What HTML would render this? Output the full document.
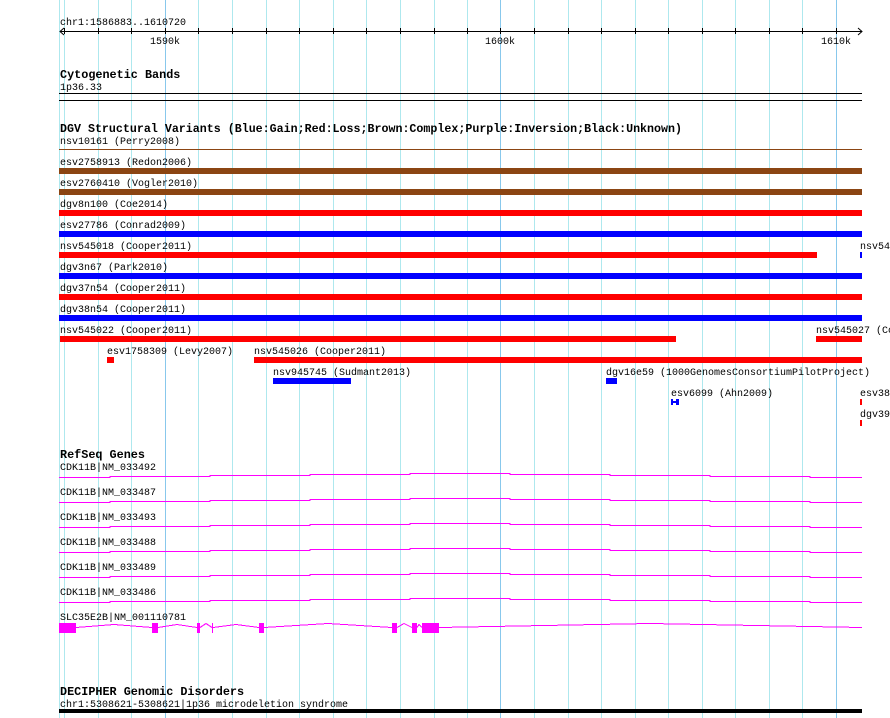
<!DOCTYPE html>
<html><head><meta charset="utf-8"><style>
html,body{margin:0;padding:0;background:#fff;width:890px;height:718px;overflow:hidden}
svg{display:block}
text{font-family:"Liberation Mono",monospace;font-size:10px;fill:#000}
.b{font-weight:bold;font-size:11.8px}
</style></head><body>
<svg width="890" height="718" xmlns="http://www.w3.org/2000/svg" shape-rendering="crispEdges">
<g fill="#aee8ee">
<rect x="59" y="0" width="1" height="718"/>
<rect x="64" y="0" width="1" height="718"/><rect x="98" y="0" width="1" height="718"/><rect x="131" y="0" width="1" height="718"/>
<rect x="198" y="0" width="1" height="718"/><rect x="232" y="0" width="1" height="718"/><rect x="266" y="0" width="1" height="718"/>
<rect x="299" y="0" width="1" height="718"/><rect x="333" y="0" width="1" height="718"/><rect x="366" y="0" width="1" height="718"/>
<rect x="400" y="0" width="1" height="718"/><rect x="434" y="0" width="1" height="718"/><rect x="467" y="0" width="1" height="718"/>
<rect x="534" y="0" width="1" height="718"/><rect x="568" y="0" width="1" height="718"/><rect x="601" y="0" width="1" height="718"/>
<rect x="635" y="0" width="1" height="718"/><rect x="668" y="0" width="1" height="718"/><rect x="702" y="0" width="1" height="718"/>
<rect x="735" y="0" width="1" height="718"/><rect x="769" y="0" width="1" height="718"/><rect x="802" y="0" width="1" height="718"/>
</g>
<g fill="#88c8ec">
<rect x="165" y="0" width="1" height="718"/><rect x="500" y="0" width="1" height="718"/><rect x="836" y="0" width="1" height="718"/>
</g>
<!-- ruler -->
<text x="60" y="25">chr1:1586883..1610720</text>
<rect x="60" y="31" width="802" height="1" fill="#000"/>
<path d="M64 28 L60 31.5 L64 35 M858 28 L862 31.5 L858 35" stroke="#000" fill="none" shape-rendering="auto"/>
<g fill="#000">
<rect x="64" y="28" width="1" height="6"/><rect x="98" y="28" width="1" height="6"/><rect x="131" y="28" width="1" height="6"/><rect x="165" y="28" width="1" height="6"/>
<rect x="198" y="28" width="1" height="6"/><rect x="232" y="28" width="1" height="6"/><rect x="266" y="28" width="1" height="6"/><rect x="299" y="28" width="1" height="6"/>
<rect x="333" y="28" width="1" height="6"/><rect x="366" y="28" width="1" height="6"/><rect x="400" y="28" width="1" height="6"/><rect x="434" y="28" width="1" height="6"/>
<rect x="467" y="28" width="1" height="6"/><rect x="500" y="28" width="1" height="6"/><rect x="534" y="28" width="1" height="6"/><rect x="568" y="28" width="1" height="6"/>
<rect x="601" y="28" width="1" height="6"/><rect x="635" y="28" width="1" height="6"/><rect x="668" y="28" width="1" height="6"/><rect x="702" y="28" width="1" height="6"/>
<rect x="735" y="28" width="1" height="6"/><rect x="769" y="28" width="1" height="6"/><rect x="802" y="28" width="1" height="6"/><rect x="836" y="28" width="1" height="6"/>
</g>
<text x="165" y="44" text-anchor="middle">1590k</text>
<text x="500" y="44" text-anchor="middle">1600k</text>
<text x="836" y="44" text-anchor="middle">1610k</text>
<!-- cytoband -->
<text class="b" x="60" y="78">Cytogenetic Bands</text>
<text x="60" y="90">1p36.33</text>
<rect x="59" y="93" width="803" height="1" fill="#000"/>
<rect x="59" y="100" width="803" height="1" fill="#000"/>
<!-- DGV -->
<text class="b" x="60" y="132" textLength="622" lengthAdjust="spacingAndGlyphs">DGV Structural Variants (Blue:Gain;Red:Loss;Brown:Complex;Purple:Inversion;Black:Unknown)</text>
<text x="60" y="144">nsv10161 (Perry2008)</text>
<rect x="59" y="149" width="803" height="1" fill="#8b4513"/>
<text x="60" y="165">esv2758913 (Redon2006)</text>
<rect x="59" y="168" width="803" height="6" fill="#8b4513"/>
<text x="60" y="186">esv2760410 (Vogler2010)</text>
<rect x="59" y="189" width="803" height="6" fill="#8b4513"/>
<text x="60" y="207">dgv8n100 (Coe2014)</text>
<rect x="59" y="210" width="803" height="6" fill="#f00"/>
<text x="60" y="228">esv27786 (Conrad2009)</text>
<rect x="59" y="231" width="803" height="6" fill="#00f"/>
<text x="60" y="249">nsv545018 (Cooper2011)</text>
<rect x="59" y="252" width="758" height="6" fill="#f00"/>
<text x="860" y="249">nsv54</text>
<rect x="860" y="252" width="2" height="6" fill="#00f"/>
<text x="60" y="270">dgv3n67 (Park2010)</text>
<rect x="59" y="273" width="803" height="6" fill="#00f"/>
<text x="60" y="291">dgv37n54 (Cooper2011)</text>
<rect x="59" y="294" width="803" height="6" fill="#f00"/>
<text x="60" y="312">dgv38n54 (Cooper2011)</text>
<rect x="59" y="315" width="803" height="6" fill="#00f"/>
<text x="60" y="333">nsv545022 (Cooper2011)</text>
<rect x="60" y="336" width="616" height="6" fill="#f00"/>
<text x="816" y="333">nsv545027 (Cooper2011)</text>
<rect x="816" y="336" width="46" height="6" fill="#f00"/>
<text x="107" y="354">esv1758309 (Levy2007)</text>
<rect x="107" y="357" width="7" height="6" fill="#f00"/>
<text x="254" y="354">nsv545026 (Cooper2011)</text>
<rect x="254" y="357" width="608" height="6" fill="#f00"/>
<text x="273" y="375">nsv945745 (Sudmant2013)</text>
<rect x="273" y="378" width="78" height="6" fill="#00f"/>
<text x="606" y="375">dgv16e59 (1000GenomesConsortiumPilotProject)</text>
<rect x="606" y="378" width="11" height="6" fill="#00f"/>
<text x="671" y="396">esv6099 (Ahn2009)</text>
<rect x="671" y="399" width="2" height="6" fill="#00f"/>
<rect x="676" y="399" width="3" height="6" fill="#00f"/>
<rect x="673" y="401" width="3" height="2" fill="#00f"/>
<text x="860" y="396">esv38</text>
<rect x="860" y="399" width="2" height="6" fill="#f00"/>
<text x="860" y="417">dgv39</text>
<rect x="860" y="420" width="2" height="6" fill="#f00"/>
<!-- RefSeq -->
<text class="b" x="60" y="458">RefSeq Genes</text>
<defs>
<path id="g" d="M59 0.5H110V-0.5H210V-1.5H310V-2.5H410V-3.5H510V-2.5H610V-1.5H710V-0.5H810V0.5H862" stroke="#f0f" fill="none"/>
</defs>
<text x="60" y="470">CDK11B|NM_033492</text><use href="#g" y="477"/>
<text x="60" y="495">CDK11B|NM_033487</text><use href="#g" y="502"/>
<text x="60" y="520">CDK11B|NM_033493</text><use href="#g" y="527"/>
<text x="60" y="545">CDK11B|NM_033488</text><use href="#g" y="552"/>
<text x="60" y="570">CDK11B|NM_033489</text><use href="#g" y="577"/>
<text x="60" y="595">CDK11B|NM_033486</text><use href="#g" y="602"/>
<text x="60" y="620">SLC35E2B|NM_001110781</text>
<path d="M76 627.5L114 624.5L152 627.5M158 627.5L177 624.5L197 627.5M200 627.5L206 623.5L212 627.5M213 627.5L236 624.5L259 627.5M264 627.5L328 623.5L392 627.5M397 627.5L404 623.5L412 627.5M417 627.5L419 624.5L422 627.5M439 627.5L650 623.5L862 627.5" stroke="#f0f" fill="none"/>
<g fill="#f0f">
<rect x="59" y="623" width="17" height="10"/><rect x="152" y="623" width="6" height="10"/><rect x="197" y="623" width="3" height="10"/>
<rect x="212" y="623" width="1" height="10"/><rect x="259" y="623" width="5" height="10"/><rect x="392" y="623" width="5" height="10"/>
<rect x="412" y="623" width="5" height="10"/><rect x="422" y="623" width="17" height="10"/>
</g>
<!-- DECIPHER -->
<text class="b" x="60" y="695">DECIPHER Genomic Disorders</text>
<text x="60" y="707">chr1:5308621-5308621|1p36 microdeletion syndrome</text>
<rect x="59" y="709" width="803" height="4" fill="#000"/>
</svg>
</body></html>
